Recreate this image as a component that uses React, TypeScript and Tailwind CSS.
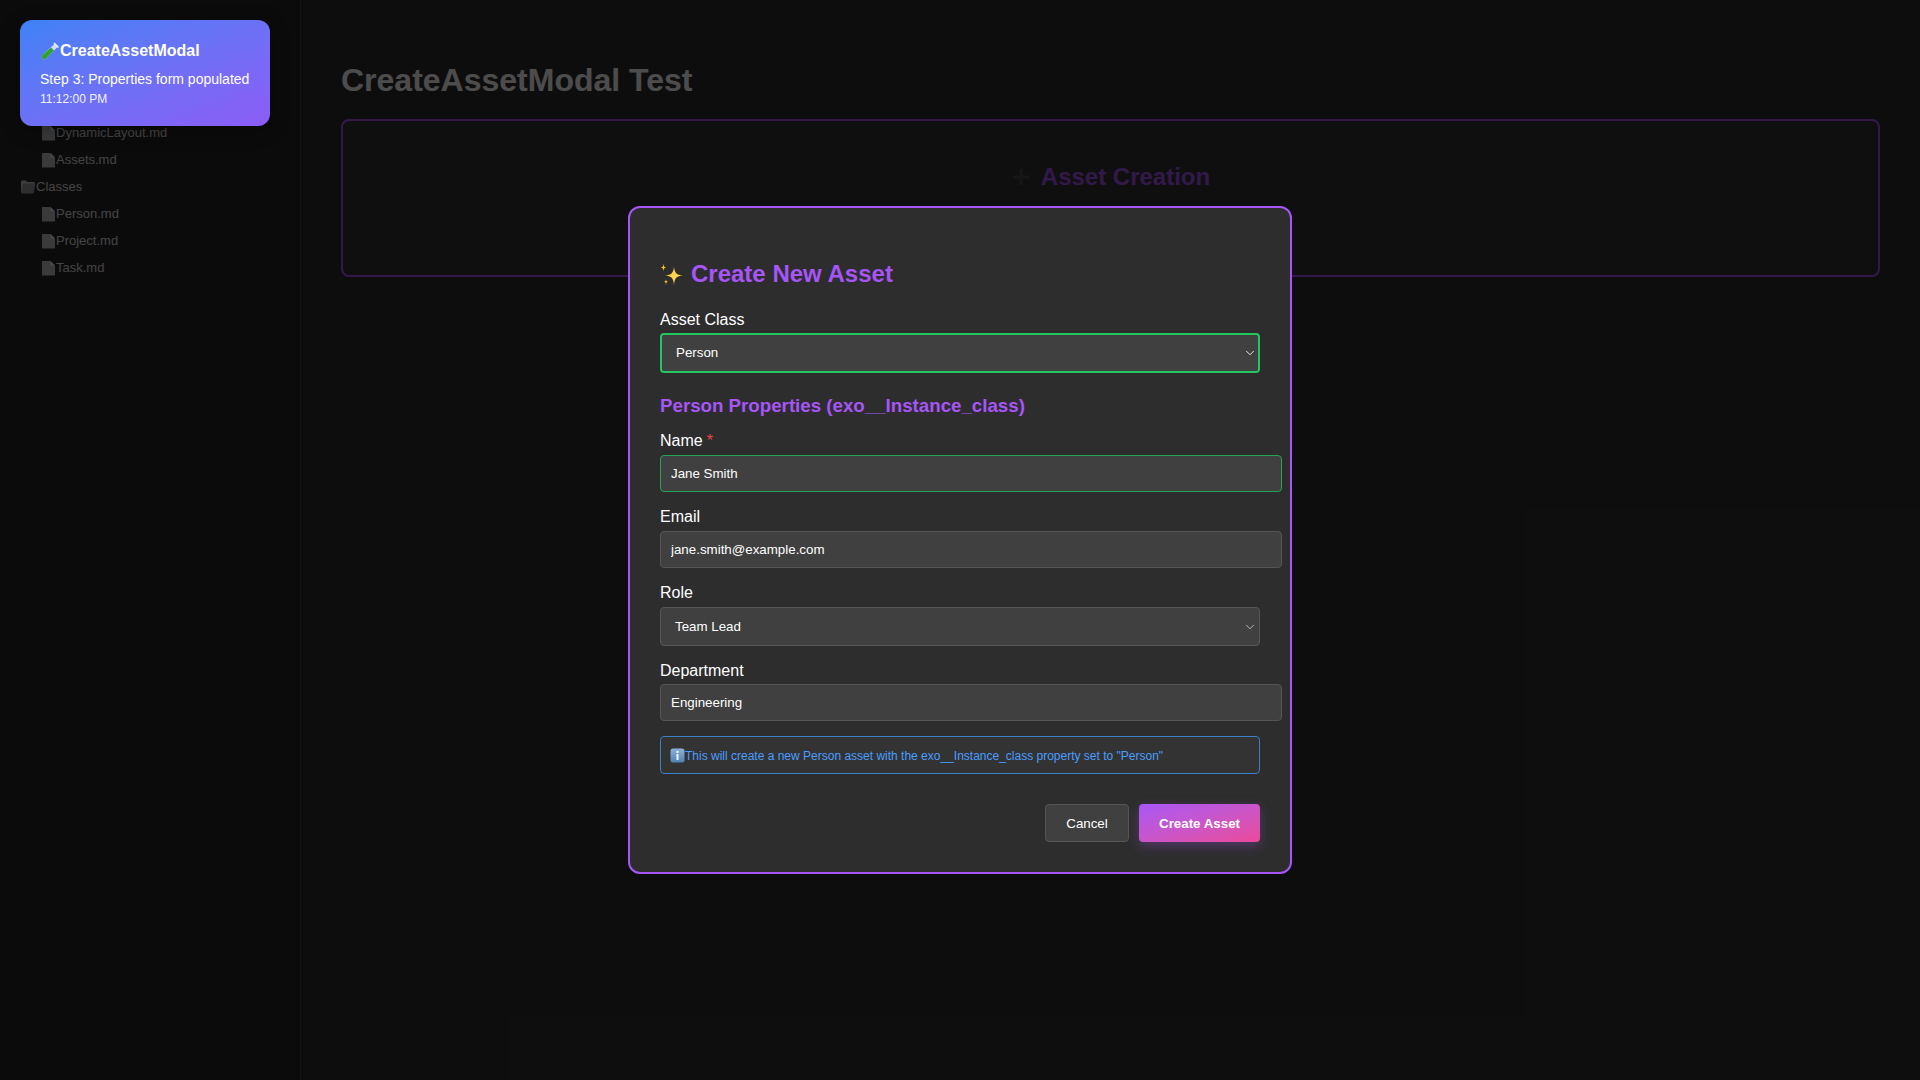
import { ChevronDown } from "lucide-react";

const FONT = "font-['Liberation_Sans',Arial,sans-serif]";

function FileIcon() {
  return (
    <svg width="15" height="16" viewBox="0 0 15 16" className="shrink-0">
      <path d="M1 1h8.5l4.5 4.5v10H1z" fill="#c4c4c4" />
      <path d="M9.5 1v4.5H14z" fill="#f0f0f0" />
    </svg>
  );
}

function FolderIcon() {
  return (
    <svg width="16" height="15" viewBox="0 0 16 15" className="shrink-0">
      <path d="M2 1.5h4l1 1.5h7.5v2H3.5L1.5 14H1V2.5z" fill="#c8c8c8" />
      <path d="M3.5 4.5h12l-2 10H1z" fill="#9a9a9a" />
    </svg>
  );
}

function TestTube() {
  return (
    <svg width="20" height="20" viewBox="0 0 20 20" className="shrink-0">
      <path d="M15 2.5L18 5.5L6 17.5A2.1 2.1 0 0 1 2.5 14z" fill="#cfdcf2" />
      <path d="M11 6.6L14 9.6L6 17.5A2.1 2.1 0 0 1 2.5 14z" fill="#2fa32f" />
      <path d="M14 2L18.5 6.5" stroke="#f2f5fa" strokeWidth="1.4" />
    </svg>
  );
}

function Sparkles() {
  return (
    <svg width="24" height="24" viewBox="0 0 24 24" className="shrink-0">
      <path d="M14 4.5C14.6 11 16.5 13 23 13.5C16.5 14 14.6 16 14 23C13.4 16 11.5 14 5 13.5C11.5 13 13.4 11 14 4.5Z" fill="#fcd34d" />
      <path d="M3.5 1.5C3.8 4.5 4.2 5 6 5.5C4.2 6 3.8 6.5 3.5 9.5C3.2 6.5 2.8 6 1 5.5C2.8 5 3.2 4.5 3.5 1.5Z" fill="#fbbf24" />
      <path d="M6 17C6.2 19 6.6 19.4 8.2 19.8C6.6 20.2 6.2 20.6 6 23C5.8 20.6 5.4 20.2 3.8 19.8C5.4 19.4 5.8 19 6 17Z" fill="#fbbf24" />
    </svg>
  );
}

function InfoIcon() {
  return (
    <svg width="15" height="15" viewBox="0 0 15 15" className="shrink-0">
      <defs>
        <linearGradient id="infoBg" x1="0" y1="0" x2="0" y2="1">
          <stop offset="0" stopColor="#8fb3d6" />
          <stop offset="1" stopColor="#4f82b5" />
        </linearGradient>
      </defs>
      <rect x="0.5" y="0.5" width="14" height="14" rx="2.5" fill="url(#infoBg)" />
      <rect x="6.5" y="6" width="2" height="6" fill="#f2f6fa" />
      <rect x="6.5" y="3" width="2" height="2" fill="#f2f6fa" />
    </svg>
  );
}

function TreeRow({ name, nested = true }: { name: string; nested?: boolean }) {
  return (
    <div className={`flex h-[27px] items-center text-[13px] text-[#e0e0e0] ${nested ? "pl-[21px]" : ""}`}>
      {nested ? <FileIcon /> : <FolderIcon />}
      <span>{name}</span>
    </div>
  );
}

function Label({ text, required, tight }: { text: string; required?: boolean; tight?: boolean }) {
  return (
    <div className={`h-[18px] text-base leading-[18px] text-white ${tight ? "mb-1" : "mb-[5px]"}`}>
      {text}
      {required && <span className="ml-1 text-[#ef4444]">*</span>}
    </div>
  );
}

function TextField({ label, value, required, active, tight }: { label: string; value: string; required?: boolean; active?: boolean; tight?: boolean }) {
  return (
    <div className="mt-4">
      <Label text={label} required={required} tight={tight} />
      <input
        readOnly
        value={value}
        className={`block h-[37px] w-[622px] rounded border bg-[#404040] px-2.5 text-[13.33px] text-white outline-none ${active ? "border-[#22a45a]" : "border-[#555555]"}`}
      />
    </div>
  );
}

function SelectBox({ value, strong }: { value: string; strong?: boolean }) {
  return (
    <div
      className={`flex w-full items-center justify-between rounded bg-[#404040] text-[13.33px] text-white ${strong ? "h-10 border-2 border-[#22c55e] pl-[14px] pr-[1px]" : "h-[39px] border border-[#555555] pl-[14px] pr-[2px]"}`}
    >
      <span>{value}</span>
      <ChevronDown size={14} strokeWidth={1.5} className={strong ? "text-white" : "text-[#c8c8c8]"} />
    </div>
  );
}

export default function App() {
  return (
    <div className={`relative flex h-screen w-full overflow-hidden bg-[#2d2d2d] ${FONT}`}>
      <aside className="w-[301px] shrink-0 border-r border-[#444444] bg-[#252525] px-5 pt-[119px]">
        <TreeRow name="DynamicLayout.md" />
        <TreeRow name="Assets.md" />
        <TreeRow name="Classes" nested={false} />
        <TreeRow name="Person.md" />
        <TreeRow name="Project.md" />
        <TreeRow name="Task.md" />
      </aside>

      <main className="min-w-0 flex-1 px-10 pt-[62px]">
        <h1 className="text-[32px] leading-[37px] font-bold text-white">CreateAssetModal Test</h1>
        <section className="mt-5 flex h-[158px] flex-col items-center rounded-lg border-2 border-[#a855f7] bg-[#333333] pt-10">
          <h2 className="flex items-center gap-[10px] text-2xl font-bold text-[#a855f7]">
            <svg width="20" height="20" viewBox="0 0 20 20" className="shrink-0">
              <path d="M8.5 2h3v6.5H18v3h-6.5V18h-3v-6.5H2v-3h6.5z" fill="#4a4a4a" />
            </svg>
            Asset Creation
          </h2>
        </section>
      </main>

      <div className="absolute inset-0 flex items-center justify-center bg-black/70">
        <div className="h-[668px] w-[664px] rounded-xl border-2 border-[#a855f7] bg-[#2d2d2d] p-[30px]">
          <h2 className="mt-[22px] mb-[23px] flex h-7 items-center gap-[7px] text-2xl leading-7 font-bold text-[#a855f7]">
            <Sparkles />
            Create New Asset
          </h2>
          <Label text="Asset Class" tight />
          <SelectBox value="Person" strong />
          <h3 className="mt-[22px] h-[21px] text-[18.72px] leading-[21px] font-bold text-[#a855f7]">
            Person Properties (exo__Instance_class)
          </h3>
          <TextField label="Name" value="Jane Smith" required active />
          <TextField label="Email" value="jane.smith@example.com" />
          <div className="mt-4">
            <Label text="Role" />
            <SelectBox value="Team Lead" />
          </div>
          <TextField label="Department" value="Engineering" tight />
          <div className="mt-[15px] flex h-[38px] items-center rounded border border-[#3b7fc4] bg-[#333333] pt-px pl-[9px] text-xs text-[#4a9eff]">
            <InfoIcon />
            <span>This will create a new Person asset with the exo__Instance_class property set to "Person"</span>
          </div>
          <div className="mt-[30px] flex justify-end gap-2.5">
            <button className="h-[38px] w-[84px] rounded border border-[#555555] bg-[#404040] pt-px text-[13.33px] text-white">Cancel</button>
            <button className="h-[38px] w-[121px] rounded bg-gradient-to-br from-[#a855f7] to-[#ec4899] pt-px text-[13.33px] font-bold text-white shadow-[0_4px_12px_rgba(168,85,247,0.3)]">
              Create Asset
            </button>
          </div>
        </div>
      </div>

      <div className="absolute top-5 left-5 h-[106px] w-[250px] rounded-xl bg-gradient-to-br from-[#3b82f6] to-[#8b5cf6] px-5 pt-[21px] text-white shadow-[0_4px_20px_rgba(0,0,0,0.3)]">
        <div className="flex h-5 items-center text-base font-bold">
          <TestTube />
          CreateAssetModal
        </div>
        <div className="mt-[10px] text-sm leading-4">Step 3: Properties form populated</div>
        <div className="mt-[5px] text-xs leading-[14px] opacity-90">11:12:00 PM</div>
      </div>
    </div>
  );
}
